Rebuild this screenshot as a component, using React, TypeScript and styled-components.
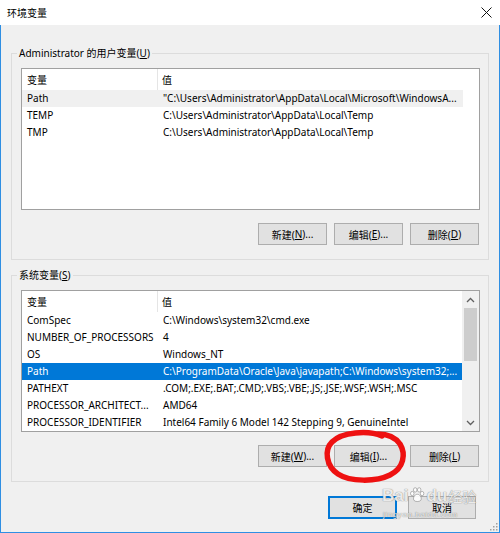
import React from "react";
import styled, { createGlobalStyle } from "styled-components";

const Global = createGlobalStyle`
  html, body { margin: 0; padding: 0; background: #f0f0f0; }
  body {
    font-family: "Noto Sans", "Noto Sans CJK SC", sans-serif;
    font-size: 10px;
    color: #000;
  }
  * { box-sizing: border-box; }
`;

const Window = styled.div`
  position: relative;
  width: 500px;
  height: 533px;
  display: flex;
  flex-direction: column;
  background: #f0f0f0;
  overflow: hidden;
`;

const TitleBar = styled.div`
  height: 25px;
  flex-shrink: 0;
  background: #fff;
  display: flex;
  align-items: center;
  justify-content: space-between;
  padding: 0 8px 0 7px;
`;

const Title = styled.span`
  font-size: 10px;
  line-height: 1;
`;

const Body = styled.div`
  flex: 1;
  border: 1px solid #2f8fe3;
  border-top: none;
  padding: 28px 10px 0 10px;
  display: flex;
  flex-direction: column;
`;

const GroupBox = styled.div<{ $top?: number }>`
  position: relative;
  margin-top: ${(p) => p.$top ?? 0}px;
  border: 1px solid #dcdcdc;
  padding: 14px 8px 14px 9px;
  display: flex;
  flex-direction: column;
`;

const GroupLabel = styled.span`
  position: absolute;
  top: -8px;
  left: 5px;
  padding: 0 2px;
  background: #f0f0f0;
  line-height: 14px;
  white-space: nowrap;
`;

const ListBox = styled.div`
  height: 142px;
  border: 1px solid #a0a0a0;
  background: #fff;
  display: flex;
`;

const ListContent = styled.div`
  flex: 1;
  display: flex;
  flex-direction: column;
  overflow: hidden;
`;

const HeaderRow = styled.div`
  height: 21px;
  display: grid;
  grid-template-columns: 136px 1fr;
  align-items: stretch;
`;

const HeaderCell = styled.div<{ $divider?: boolean }>`
  display: flex;
  align-items: center;
  padding-left: ${(p) => (p.$divider ? 5 : 4)}px;
  border-right: ${(p) => (p.$divider ? "1px solid #e5e5e5" : "none")};
`;

const Row = styled.div<{ $state?: "hover" | "selected" }>`
  height: 17px;
  width: 441px;
  display: grid;
  grid-template-columns: 136px 1fr;
  align-items: center;
  background: ${(p) =>
    p.$state === "selected" ? "#0078d7" : p.$state === "hover" ? "#f0f0f0" : "transparent"};
  color: ${(p) => (p.$state === "selected" ? "#fff" : "#000")};
`;

const Cell = styled.div`
  padding-left: 5px;
  white-space: nowrap;
  overflow: hidden;
  line-height: 17px;
`;

const ScrollBar = styled.div`
  width: 17px;
  background: #f0f0f0;
  display: flex;
  flex-direction: column;
`;

const ScrollArrow = styled.div`
  height: 17px;
  display: flex;
  align-items: center;
  justify-content: center;
`;

const ScrollTrack = styled.div`
  flex: 1;
  display: flex;
  flex-direction: column;
`;

const ScrollThumb = styled.div`
  height: 53px;
  margin: 0 2px;
  background: #cdcdcd;
`;

const ButtonRow = styled.div<{ $top: number; $right?: number }>`
  display: flex;
  justify-content: flex-end;
  gap: 7px;
  margin-top: ${(p) => p.$top}px;
  padding-right: ${(p) => p.$right ?? 1}px;
`;

const Button = styled.div<{ $primary?: boolean; $w?: number; $h?: number }>`
  width: ${(p) => p.$w ?? 69}px;
  height: ${(p) => p.$h ?? 22}px;
  background: #e1e1e1;
  border: 1px solid ${(p) => (p.$primary ? "#0078d7" : "#adadad")};
  box-shadow: ${(p) => (p.$primary ? "inset 0 0 0 1px #0078d7" : "none")};
  display: flex;
  align-items: center;
  justify-content: center;
  font-size: 10px;
  white-space: nowrap;
`;

const Key = styled.span`
  text-decoration: underline;
  text-underline-offset: 1px;
`;

const DialogButtons = styled.div`
  display: flex;
  justify-content: flex-end;
  gap: 11px;
  margin-top: 14px;
  padding-right: 13px;
`;

const Grip = styled.svg`
  position: absolute;
  right: 2px;
  bottom: 2px;
`;

const Ink = styled.svg`
  position: absolute;
  left: 320px;
  top: 428px;
  pointer-events: none;
`;

const Watermark = styled.div`
  position: absolute;
  left: 382px;
  top: 486px;
  display: flex;
  flex-direction: column;
  align-items: flex-start;
  white-space: nowrap;
  color: rgba(255, 255, 255, 0.85);
  text-shadow: 0 0 1px rgba(80, 80, 80, 0.6), 0 0 1px rgba(80, 80, 80, 0.4);
  pointer-events: none;
`;

const WaterTop = styled.div`
  display: flex;
  align-items: flex-end;
  font-family: "Liberation Sans", sans-serif;
  font-weight: bold;
  font-size: 17px;
  line-height: 20px;
`;

const WaterCjk = styled.span`
  font-family: "Noto Sans CJK SC", sans-serif;
  font-weight: normal;
  font-size: 14px;
  line-height: 20px;
  margin-left: 1px;
`;

const WaterUrl = styled.div`
  font-family: "Liberation Sans", sans-serif;
  font-size: 8px;
  line-height: 10px;
  letter-spacing: 0.6px;
  margin-left: 1px;
  margin-top: 4px;
`;

type Item = { name: string; value: string; state?: "hover" | "selected" };

const userVars: Item[] = [
  {
    name: "Path",
    value: '"C:\\Users\\Administrator\\AppData\\Local\\Microsoft\\WindowsA...',
    state: "hover",
  },
  { name: "TEMP", value: "C:\\Users\\Administrator\\AppData\\Local\\Temp" },
  { name: "TMP", value: "C:\\Users\\Administrator\\AppData\\Local\\Temp" },
];

const sysVars: Item[] = [
  { name: "ComSpec", value: "C:\\Windows\\system32\\cmd.exe" },
  { name: "NUMBER_OF_PROCESSORS", value: "4" },
  { name: "OS", value: "Windows_NT" },
  {
    name: "Path",
    value: "C:\\ProgramData\\Oracle\\Java\\javapath;C:\\Windows\\system32;...",
    state: "selected",
  },
  { name: "PATHEXT", value: ".COM;.EXE;.BAT;.CMD;.VBS;.VBE;.JS;.JSE;.WSF;.WSH;.MSC" },
  { name: "PROCESSOR_ARCHITECT...", value: "AMD64" },
  { name: "PROCESSOR_IDENTIFIER", value: "Intel64 Family 6 Model 142 Stepping 9, GenuineIntel" },
];

const Chevron = ({ up }: { up?: boolean }) => (
  <svg width="9" height="6" viewBox="0 0 9 6">
    <polyline
      points={up ? "1,5 4.5,1.5 8,5" : "1,1 4.5,4.5 8,1"}
      fill="none"
      stroke="#606060"
      strokeWidth="1.3"
    />
  </svg>
);

const VarList = ({ items, scroll }: { items: Item[]; scroll?: boolean }) => (
  <ListBox>
    <ListContent>
      <HeaderRow>
        <HeaderCell $divider>变量</HeaderCell>
        <HeaderCell>值</HeaderCell>
      </HeaderRow>
      {items.map((it) => (
        <Row key={it.name + it.value} $state={it.state}>
          <Cell>{it.name}</Cell>
          <Cell>{it.value}</Cell>
        </Row>
      ))}
    </ListContent>
    {scroll && (
      <ScrollBar>
        <ScrollArrow>
          <Chevron up />
        </ScrollArrow>
        <ScrollTrack>
          <ScrollThumb />
        </ScrollTrack>
        <ScrollArrow>
          <Chevron />
        </ScrollArrow>
      </ScrollBar>
    )}
  </ListBox>
);

const Paw = () => (
  <svg width="16" height="16" viewBox="0 0 22 22" style={{ margin: "0 1px 3px" }}>
    <g fill="rgba(255,255,255,0.9)" stroke="rgba(80,80,80,0.55)" strokeWidth="1">
      <ellipse cx="4.5" cy="9" rx="2.4" ry="3" />
      <ellipse cx="8.5" cy="4" rx="2.4" ry="3" />
      <ellipse cx="14" cy="4" rx="2.4" ry="3" />
      <ellipse cx="18" cy="9" rx="2.4" ry="3" />
      <path d="M11.5 10 C7 10 5 16 7 18.5 C9 20.5 14 20.5 16 18.5 C18 16 16 10 11.5 10 Z" />
    </g>
  </svg>
);

export default function App() {
  return (
    <>
      <Global />
      <Window>
        <TitleBar>
          <Title>环境变量</Title>
          <svg width="11" height="11" viewBox="0 0 11 11">
            <path d="M0.5 0.5 L10.5 10.5 M10.5 0.5 L0.5 10.5" stroke="#111" strokeWidth="1" />
          </svg>
        </TitleBar>
        <Body>
          <GroupBox>
            <GroupLabel>
              Administrator 的用户变量(<Key>U</Key>)
            </GroupLabel>
            <VarList items={userVars} />
            <ButtonRow $top={13}>
              <Button>
                新建(<Key>N</Key>)...
              </Button>
              <Button>
                编辑(<Key>E</Key>)...
              </Button>
              <Button>
                删除(<Key>D</Key>)
              </Button>
            </ButtonRow>
          </GroupBox>
          <GroupBox $top={15}>
            <GroupLabel>
              系统变量(<Key>S</Key>)
            </GroupLabel>
            <VarList items={sysVars} scroll />
            <ButtonRow $top={13}>
              <Button>
                新建(<Key>W</Key>)...
              </Button>
              <Button>
                编辑(<Key>I</Key>)...
              </Button>
              <Button>
                删除(<Key>L</Key>)
              </Button>
            </ButtonRow>
          </GroupBox>
          <DialogButtons>
            <Button $primary $w={69} $h={23}>
              确定
            </Button>
            <Button $w={68} $h={23}>
              取消
            </Button>
          </DialogButtons>
        </Body>
        <Grip width="9" height="9" viewBox="0 0 9 9">
          <g fill="#a0a0a0">
            <rect x="7" y="1" width="1.5" height="1.5" />
            <rect x="4" y="4" width="1.5" height="1.5" />
            <rect x="7" y="4" width="1.5" height="1.5" />
            <rect x="1" y="7" width="1.5" height="1.5" />
            <rect x="4" y="7" width="1.5" height="1.5" />
            <rect x="7" y="7" width="1.5" height="1.5" />
          </g>
        </Grip>
        <Ink width="95" height="60" viewBox="0 0 95 60">
          <path
            d="M62 8 C48 2 22 4 12 14 C4 22 6 38 18 46 C30 54 56 54 70 47 C84 40 86 26 80 16 C75 9 66 6 58 6"
            fill="none"
            stroke="#ee1111"
            strokeWidth="5.5"
            strokeLinecap="round"
          />
        </Ink>
        <Watermark>
          <WaterTop>
            Bai
            <Paw />
            du
            <WaterCjk>经验</WaterCjk>
          </WaterTop>
          <WaterUrl>jingyan.baidu.com</WaterUrl>
        </Watermark>
      </Window>
    </>
  );
}
